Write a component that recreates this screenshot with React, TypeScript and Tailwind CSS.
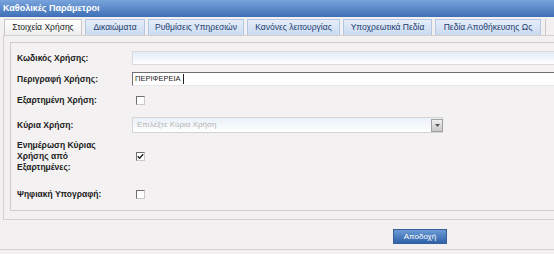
import React from "react";

const tabs = [
  { label: "Στοιχεία Χρήσης", w: 78, active: true },
  { label: "Δικαιώματα", w: 60 },
  { label: "Ρυθμίσεις Υπηρεσιών", w: 96 },
  { label: "Κανόνες λειτουργίας", w: 93 },
  { label: "Υποχρεωτικά Πεδία", w: 89 },
  { label: "Πεδία Αποθήκευσης Ως", w: 106 },
];

function Check({ checked }: { checked?: boolean }) {
  return (
    <div className="w-[9px] h-[9px] bg-white border border-t-[#6f6f6f] border-l-[#6f6f6f] border-r-[#c9c9c9] border-b-[#c9c9c9] flex items-center justify-center">
      {checked && (
        <svg width="7" height="7" viewBox="0 0 7 7">
          <path d="M0.8 3.3 L2.6 5.2 L6.2 1.2" stroke="#222" strokeWidth="1.4" fill="none" />
        </svg>
      )}
    </div>
  );
}

export default function App() {
  return (
    <div
      className="w-[554px] h-[254px] overflow-hidden bg-[#f2f0f0] flex flex-col"
      style={{ fontFamily: '"Liberation Sans", Arial, sans-serif' }}
    >
      <div className="h-[17px] shrink-0 bg-gradient-to-b from-[#78a3dc] to-[#3f70b6] flex items-center pl-[3px] text-white font-bold text-[9px]">
        Καθολικές Παράμετροι
      </div>
      <div className="h-[18px] shrink-0 flex items-end pl-[4px] gap-[3px]">
        {tabs.map((t) => (
          <div
            key={t.label}
            style={{ width: t.w }}
            className={
              "h-[16px] shrink-0 flex items-center justify-center text-[8.5px] border border-b-0 " +
              (t.active
                ? "bg-gradient-to-b from-[#ffffff] to-[#efeeee] border-[#c7c7c7] text-[#1a1a1a]"
                : "bg-gradient-to-b from-[#e6eefa] to-[#c9daf0] border-[#b3c7e2] text-[#1f3b6e]")
            }
          >
            {t.label}
          </div>
        ))}
        <div className="w-px h-[16px] ml-[1px] bg-[#c9c9c9]" />
      </div>
      <div className="ml-[3px] w-[600px] h-[185px] shrink-0 border-t border-l border-b border-[#d3d0d0] pt-[6px] pl-[6px] pb-[8px]">
        <div className="w-[600px] h-full border-t border-l border-b border-[#cfcccc] bg-[#f3f1f1] pl-[6px] text-[8.5px] font-bold text-[#1c1c1c] flex flex-col">
          <div className="mt-[8px] h-[14px] flex items-center">
            <div className="w-[115px]">Κωδικός Χρήσης:</div>
            <div className="h-[14px] w-[460px] bg-gradient-to-b from-[#e3ecf7] to-white border border-[#dadada]" />
          </div>
          <div className="mt-[7px] h-[14px] flex items-center">
            <div className="w-[115px]">Περιγραφή Χρήσης:</div>
            <div className="h-[14px] w-[460px] bg-white border border-t-[#707070] border-l-[#707070] border-r-[#dadada] border-b-[#e6e6e6] flex items-center pl-[2px] font-normal text-[7.5px] text-[#222]">
              ΠΕΡΙΦΕΡΕΙΑ
              <span className="ml-[2px] w-px h-[10px] bg-[#222]" />
            </div>
          </div>
          <div className="mt-[7px] h-[14px] flex items-center">
            <div className="w-[119px]">Εξαρτημένη Χρήση:</div>
            <Check />
          </div>
          <div className="mt-[10px] h-[16px] flex items-center">
            <div className="w-[115px]">Κύρια Χρήση:</div>
            <div className="h-[16px] w-[311px] bg-gradient-to-b from-[#eaf1f9] to-white border border-[#d4d4d4] flex items-center pl-[4px] font-normal text-[8px] text-[#b4b4b4] relative">
              Επιλέξτε Κύρια Χρήση
              <div className="absolute right-[-1px] top-[1px] w-[12px] h-[13px] bg-gradient-to-b from-[#efefef] to-[#c8c8c8] border border-[#a0a0a0] flex items-center justify-center">
                <svg width="5" height="3" viewBox="0 0 5 3">
                  <path d="M0 0 L5 0 L2.5 3 Z" fill="#555" />
                </svg>
              </div>
            </div>
          </div>
          <div className="mt-[7px] flex items-center">
            <div className="w-[119px] leading-[11px]">
              Ενημέρωση Κύριας
              <br />
              Χρήσης από
              <br />
              Εξαρτημένες:
            </div>
            <Check checked />
          </div>
          <div className="mt-[14px] h-[14px] flex items-center">
            <div className="w-[119px]">Ψηφιακή Υπογραφή:</div>
            <Check />
          </div>
        </div>
      </div>
      <div className="h-[27px] shrink-0 flex items-end pb-[3px] pl-[393px]">
        <div className="w-[54px] h-[15px] bg-gradient-to-b from-[#6d9bd6] to-[#2f62a8] border border-[#35609c] flex items-center justify-center text-white text-[8px]">
          Αποδοχή
        </div>
      </div>
      <div className="h-px shrink-0 mt-[2px] bg-[#d5d2d2]" />
    </div>
  );
}
